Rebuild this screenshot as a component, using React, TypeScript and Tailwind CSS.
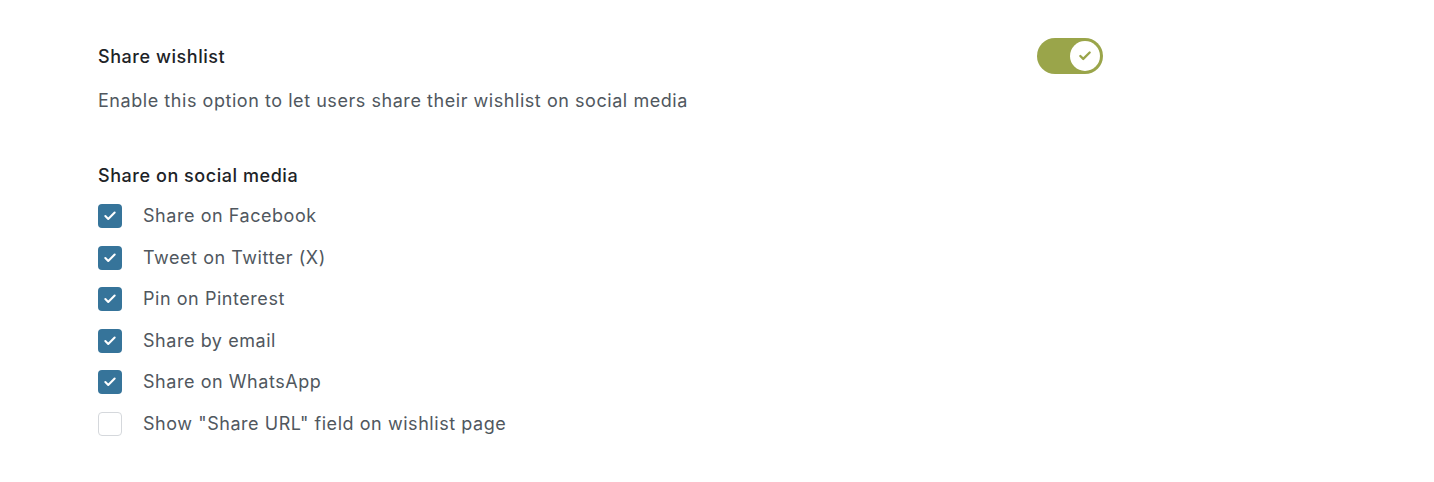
import { Check } from "lucide-react";

const options = [
  { label: "Share on Facebook", checked: true },
  { label: "Tweet on Twitter (X)", checked: true },
  { label: "Pin on Pinterest", checked: true },
  { label: "Share by email", checked: true },
  { label: "Share on WhatsApp", checked: true },
  { label: 'Show "Share URL" field on wishlist page', checked: false },
];

export default function App() {
  return (
    <div className="min-h-[482px] w-[1434px] bg-white font-['Inter',sans-serif] tracking-[0.55px] pl-[98px] pt-[38px]">
      <div className="w-[1005px]">
        <div className="flex items-start justify-between">
          <div className="pt-[5px]">
            <h2 className="text-[18px] leading-[28px] font-medium text-[#1d2327]">
              Share wishlist
            </h2>
            <p className="mt-[16px] text-[18px] leading-[28px] text-[#50575e]">
              Enable this option to let users share their wishlist on social media
            </p>
          </div>
          <button className="relative h-[36px] w-[66px] rounded-full bg-[#9aa54a]">
            <span className="absolute right-[3px] top-[3px] flex h-[30px] w-[30px] items-center justify-center rounded-full bg-white">
              <Check className="h-[14px] w-[14px] text-[#9aa54a]" strokeWidth={4} />
            </span>
          </button>
        </div>

        <h3 className="mt-[47px] text-[18px] leading-[28px] font-medium text-[#1d2327]">
          Share on social media
        </h3>
        <ul className="mt-[14px] flex flex-col gap-[17.6px]">
          {options.map((opt, idx) => (
            <li key={idx} className="flex items-center gap-[21px]">
              {opt.checked ? (
                <span className="flex h-[24px] w-[24px] items-center justify-center rounded-[4px] bg-[#36749a]">
                  <Check className="h-[14px] w-[14px] text-white" strokeWidth={3.5} />
                </span>
              ) : (
                <span className="h-[24px] w-[24px] rounded-[4px] border border-[#d5d8dc] bg-white" />
              )}
              <span className="text-[18px] leading-[24px] text-[#50575e]">{opt.label}</span>
            </li>
          ))}
        </ul>
      </div>
    </div>
  );
}
